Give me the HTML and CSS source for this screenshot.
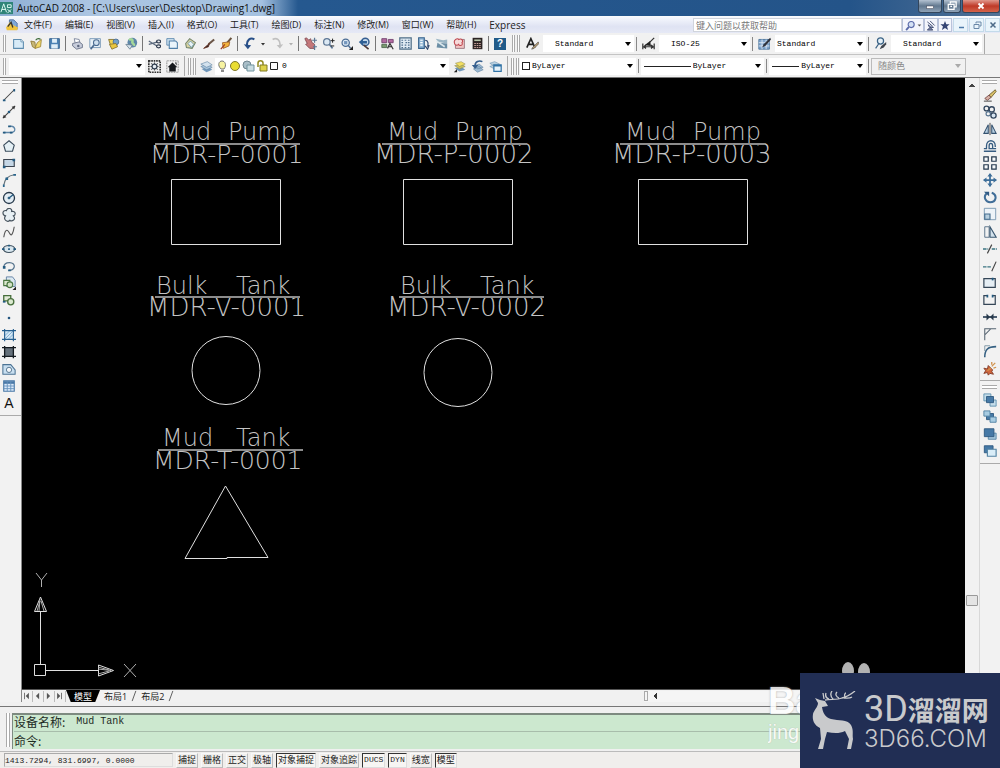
FILE: index.html
```html
<!DOCTYPE html>
<html lang="zh-CN">
<head>
<meta charset="utf-8">
<title>AutoCAD 2008</title>
<link rel="stylesheet" href="styles.css">
</head>
<body>
<div class="app">
  <header class="titlebar">
    <svg class="app-icon" viewBox="0 0 14 14"><rect width="14" height="13" fill="#2f8478"/><path d="M1 11L4 2l3 9M2 8h4M8 3h4v3H8zM8 8l4 3M12 8l-4 4" fill="none" stroke="#e6fff8"/></svg>
    <h1 class="title">AutoCAD 2008 - [C:\Users\user\Desktop\Drawing1.dwg]</h1>
    <div class="window-buttons">
      <button class="win-btn" aria-label="最小化"><svg viewBox="0 0 16 12"><rect x="4" y="6" width="8" height="3" fill="#fff" stroke="#445" stroke-width=".6"/></svg></button>
      <button class="win-btn win-max" aria-label="还原"><svg viewBox="0 0 16 12"><path d="M6 3V1h7v6h-2M3.500 4h7v6h-7zM6 6.500h2" fill="none" stroke="#fff" stroke-width="1.500"/></svg></button>
      <button class="win-btn win-close" aria-label="关闭"><svg viewBox="0 0 16 12"><path d="M5 3l6 6M11 3l-6 6" stroke="#fff" stroke-width="2.200"/></svg></button>
    </div>
  </header>

  <nav class="menubar">
    <svg class="doc-icon" viewBox="0 0 14 14"><path d="M4 1h5l4 4v7H4z" fill="#7fa8d8" stroke="#4a6a9a"/><path d="M0 10l5-7 3 4 6 3-1 3H1z" fill="#f0c43c"/><path d="M2 9l4-5 2 6" fill="none" stroke="#333" stroke-width="1.500"/></svg>
    <button class="menu">文件(F)</button>
    <button class="menu">编辑(E)</button>
    <button class="menu">视图(V)</button>
    <button class="menu">插入(I)</button>
    <button class="menu">格式(O)</button>
    <button class="menu">工具(T)</button>
    <button class="menu">绘图(D)</button>
    <button class="menu">标注(N)</button>
    <button class="menu">修改(M)</button>
    <button class="menu">窗口(W)</button>
    <button class="menu">帮助(H)</button>
    <button class="menu express">Express</button>
    <div class="help-area">
      <input class="help-input" type="text" aria-label="帮助搜索" placeholder="键入问题以获取帮助">
      <button class="help-btn search-btn" aria-label="搜索"><svg viewBox="0 0 20 12"><circle cx="8" cy="5" r="3.300" fill="#d5e2f5" stroke="#5a6aa8" stroke-width="1.200"/><path d="M5.500 7.500L2.500 11" stroke="#5a6aa8" stroke-width="2"/><path d="M15 5h4l-2 2z" fill="#555"/></svg></button>
      <button class="help-btn" aria-label="通讯中心"><svg viewBox="0 0 12 12"><path d="M2 2l6 5M5 1l5 5M3 5c0 3 3 4 6 3M5 8l-3 3h6z" fill="#7c87a8" stroke="#3e4a70"/></svg></button>
      <button class="help-btn" aria-label="收藏夹"><svg viewBox="0 0 12 12"><path d="M6 1l1.400 3.600H11L8.200 7l1.200 4L6 8.700 2.600 11l1.200-4L1 4.600h3.600z" fill="#354574"/></svg></button>
      <button class="mdi-btn" aria-label="最小化图形"><svg viewBox="0 0 12 12"><path d="M4 8.500h5" stroke="#4c7aa8" stroke-width="1.500"/></svg></button>
      <button class="mdi-btn" aria-label="还原图形"><svg viewBox="0 0 12 12"><path d="M5 4.500V3h5v4H8.500M3 5.500h5v4H3z" fill="none" stroke="#6a88a8"/></svg></button>
      <button class="mdi-btn" aria-label="关闭图形"><svg viewBox="0 0 12 12"><path d="M3.500 3.500l5 5M8.500 3.500l-5 5" stroke="#4c6a88" stroke-width="1.500"/></svg></button>
    </div>
  </nav>

  <div class="toolbar-row row-standard">
    <i class="grip"></i>
    <button class="tool" aria-label="新建"><svg viewBox="0 0 16 16"><path d="M2 3h9l3 3v8H2z" fill="#d8ebf7" stroke="#5d8cae" stroke-width="1.300"/><path d="M11 3v3h3" fill="#fff" stroke="#5d8cae"/></svg></button>
    <button class="tool" aria-label="打开"><svg viewBox="0 0 16 16"><path d="M1 5l5 1 1 8-4-2z" fill="#c8b878" stroke="#8a7530"/><path d="M6 14l3-7 5-4-1 9z" fill="#f0d768" stroke="#9a8238"/><path d="M7 4c2-3 5-2 6-1" fill="none" stroke="#3c6a38" stroke-width="1.500"/></svg></button>
    <button class="tool" aria-label="保存"><svg viewBox="0 0 16 16"><path d="M2 2h12v12H2z" fill="#4c82b4" stroke="#2a5888"/><path d="M5 2h6v5H5zM4 9h8v5H4z" fill="#dfeef8"/></svg></button>
    <i class="sep"></i>
    <button class="tool" aria-label="打印"><svg viewBox="0 0 16 16"><path d="M5 7l-1-5 6 1 1 4" fill="#fff" stroke="#6b7690"/><path d="M2 8l8-2 4 3v4l-7 2-5-4z" fill="#c8cddb" stroke="#5c667e"/><circle cx="9" cy="11" r="1.500" fill="#5c667e"/></svg></button>
    <button class="tool" aria-label="打印预览"><svg viewBox="0 0 16 16"><path d="M1 2h13v11H1z" fill="#e8f1f8" stroke="#6b8fb0"/><circle cx="9" cy="7" r="3.500" fill="#cfe0ef" stroke="#4a6a90" stroke-width="1.300"/><path d="M6 10l-4 5" stroke="#4a6a90" stroke-width="2"/></svg></button>
    <button class="tool" aria-label="发布"><svg viewBox="0 0 16 16"><path d="M2 3h7l3 3v6H5z" fill="#f1d252" stroke="#7a6a28"/><circle cx="11" cy="6" r="3.500" fill="#73a0c8" stroke="#486a90"/><path d="M3 9l8-1 2 4-7 3z" fill="#e9c63e" stroke="#857030"/></svg></button>
    <button class="tool" aria-label="三维 DWF"><svg viewBox="0 0 16 16"><circle cx="9" cy="7" r="6" fill="#5d86a8"/><path d="M5 4c3-3 5 0 4 2s3 2 2 5" fill="none" stroke="#a5d89a" stroke-width="3"/><path d="M1 9l8 1-3 5z" fill="#d8e4ec" stroke="#6a8090"/></svg></button>
    <i class="sep"></i>
    <button class="tool" aria-label="剪切"><svg viewBox="0 0 16 16"><path d="M1 5l10 6M1 9l11-3" stroke="#59687c" stroke-width="1.500"/><ellipse cx="13" cy="5.500" rx="2.500" ry="1.800" fill="none" stroke="#303c50" stroke-width="1.500"/><ellipse cx="13" cy="11.500" rx="2.500" ry="1.800" fill="none" stroke="#303c50" stroke-width="1.500"/></svg></button>
    <button class="tool" aria-label="复制"><svg viewBox="0 0 16 16"><path d="M1 2h9v8H1z" fill="#d2e5f2" stroke="#507fa8"/><path d="M4 5h8l2 2v7H4z" fill="#eaf4fb" stroke="#507fa8" stroke-width="1.300"/></svg></button>
    <button class="tool" aria-label="粘贴"><svg viewBox="0 0 16 16"><path d="M2 8l5-6 7 5-4 7-7-1z" fill="#d8d2a0" stroke="#72846a" stroke-width="1.300"/><path d="M5 8l3-3 4 4-3 4z" fill="#eaf4f7" stroke="#5f90a8"/></svg></button>
    <button class="tool" aria-label="特性匹配"><svg viewBox="0 0 16 16"><path d="M15 3L8 9" stroke="#6b5648" stroke-width="2.500"/><path d="M9 8l-7 6 6-2z" fill="#222" stroke="#6a3020"/></svg></button>
    <button class="tool" aria-label="块编辑器"><svg viewBox="0 0 16 16"><path d="M14 1L9 7" stroke="#6a5440" stroke-width="2.500"/><path d="M3 7l9-1-1 5-7 3z" fill="#f2b23c" stroke="#9a5a24"/><path d="M6 9l-5 6" stroke="#9d3a20" stroke-width="1.500"/></svg></button>
    <i class="sep"></i>
    <button class="tool" aria-label="放弃"><svg viewBox="0 0 16 16"><path d="M14 3C9 0 4 4 5 11" fill="none" stroke="#284f88" stroke-width="2.500"/><path d="M1 9l9 1-4 5z" fill="#284f88"/></svg></button>
    <button class="drop" aria-label="放弃列表"><svg viewBox="0 0 8 8"><path d="M2 3h4L4 5.500z" fill="#333"/></svg></button>
    <button class="tool" aria-label="重做"><svg viewBox="0 0 16 16"><path d="M2 3c5-3 10 1 9 8" fill="none" stroke="#c0c0c0" stroke-width="2"/><path d="M7 10l8-1-4 5z" fill="#c0c0c0"/></svg></button>
    <button class="drop" aria-label="重做列表"><svg viewBox="0 0 8 8"><path d="M2 3h4L4 5.500z" fill="#b0b0b0"/></svg></button>
    <i class="sep"></i>
    <button class="tool" aria-label="实时平移"><svg viewBox="0 0 16 16"><path d="M1 2l2-1 3 3 2-2 2 5 3 2v5H7L2 9l2-1z" fill="#c4777a" stroke="#7d4850"/><path d="M13 1v6M10 4h6M11 12h5M13 10v6" stroke="#5c7894" stroke-width="1.500"/></svg></button>
    <button class="tool" aria-label="实时缩放"><svg viewBox="0 0 16 16"><circle cx="6" cy="6" r="4" fill="#dce9f4" stroke="#5c7694" stroke-width="1.500"/><path d="M9 9l4 5" stroke="#5c7694" stroke-width="2"/><path d="M13 2v5M10.500 4.500h5M11 11h4" stroke="#222" stroke-width="1.200"/></svg></button>
    <button class="tool" aria-label="窗口缩放"><svg viewBox="0 0 16 16"><circle cx="7" cy="7" r="4.500" fill="#dce9f4" stroke="#4b6c94" stroke-width="1.500"/><path d="M5 5h4v4H5z" fill="#7395bc"/><path d="M10 10l3 4" stroke="#4b6c94" stroke-width="2"/><path d="M16 11v5h-5z" fill="#222"/></svg></button>
    <button class="tool" aria-label="缩放上一个"><svg viewBox="0 0 16 16"><circle cx="9" cy="6" r="4.500" fill="#c5d9eb" stroke="#365e90" stroke-width="1.800"/><path d="M7 10l6 5" stroke="#4d3a38" stroke-width="2"/><path d="M1 6l5-4v3h5v3H6v3z" fill="#2f6095"/></svg></button>
    <i class="sep"></i>
    <button class="tool" aria-label="特性"><svg viewBox="0 0 16 16"><path d="M1 2h6v5H1zM9 3h6v4H9z" fill="#b26aa0" stroke="#6a3a68"/><path d="M1 9h6v4H1z" fill="#7a9a70" stroke="#48624a"/><path d="M8 14l3-6 4 7M9 12h5" stroke="#333" stroke-width="1.500" fill="none"/></svg></button>
    <button class="tool" aria-label="设计中心"><svg viewBox="0 0 16 16"><path d="M1 1h14v14H1z" fill="#e0ebf4" stroke="#4f6e88" stroke-width="1.500"/><path d="M3 4h2M7 4h2M11 4h2M3 7h2M8 7h2M11 7h2M3 10h2M7 10h2M11 10h2M3 13h2M7 13h2M11 13h2" stroke="#50708e" stroke-width="1.500"/></svg></button>
    <button class="tool" aria-label="工具选项板"><svg viewBox="0 0 16 16"><path d="M2 1h7v13H2z" fill="#8fb4d4" stroke="#35618c" stroke-width="1.300"/><path d="M4 4h3M4 7h3M4 10h3" stroke="#fff" stroke-width="1.500"/><path d="M10 4c4 0 4 4 3 8M10 11l3 4 2-5" fill="none" stroke="#344b70" stroke-width="1.500"/></svg></button>
    <button class="tool" aria-label="图纸集管理器"><svg viewBox="0 0 16 16"><path d="M1 2l9 2 5-1v5L4 6z" fill="#9ab5c4"/><path d="M3 7l12 1v6L2 13z" fill="#6b8ea5"/><path d="M2 5l10 7" stroke="#dce8ed" stroke-width="2"/></svg></button>
    <button class="tool" aria-label="标记集管理器"><svg viewBox="0 0 16 16"><path d="M3 3h11v11H3z" fill="#f0c4c4" stroke="#8f6a74"/><path d="M2 8c-2-5 4-7 5-5 4-2 6 2 4 4 2 3-3 5-4 2-2 2-5 1-5-1z" fill="#f6dada" stroke="#c04850" stroke-width="1.300"/></svg></button>
    <button class="tool" aria-label="快速计算器"><svg viewBox="0 0 16 16"><rect x="2" y="1" width="12" height="14" fill="#2c2424"/><path d="M4 3h8v2H4z" fill="#b7c3aa"/><path d="M4 8h2M7 8h2M10 8h2M4 10.500h2M7 10.500h2M10 10.500h2M4 13h2M7 13h2M10 13h2" stroke="#d0a8a0" stroke-width="1.200"/></svg></button>
    <i class="sep"></i>
    <button class="tool help-tool" aria-label="帮助">?</button>
    <i class="grip"></i><i class="grip grip-tight"></i>
    <div class="style-strip">
      <div class="style-set">
        <svg class="style-icon" viewBox="0 0 16 16"><path d="M1 13L6 2l5 11M3 9h6" fill="none" stroke="#222" stroke-width="2"/><path d="M15 6l-7 7-1 2 3-1 6-6z" fill="#b39a72" stroke="#444" stroke-width=".7"/></svg>
        <select class="combo indent" aria-label="文字样式"><option>Standard</option></select>
      </div>
      <div class="style-set">
        <svg class="style-icon" viewBox="0 0 16 16"><path d="M15 1L9 7M1 8v7M15 8v7M2 12h12M2 12l3-2M2 12l3 2M14 12l-3-2M14 12l-3 2" fill="none" stroke="#333" stroke-width="1.500"/><path d="M10 5l-7 5 8 1z" fill="#222"/></svg>
        <select class="combo indent" aria-label="标注样式"><option>ISO-25</option></select>
      </div>
      <div class="style-set">
        <svg class="style-icon" viewBox="0 0 16 16"><path d="M1 3h13v12H1z" fill="#82a7ce" stroke="#416c96"/><path d="M1 7h13M1 11h13M5 3v12M10 3v12" stroke="#e3edf7"/><path d="M15 1L7 9l-2 4 4-2 7-8z" fill="#30343e"/></svg>
        <select class="combo" aria-label="表格样式"><option>Standard</option></select>
      </div>
      <div class="style-set">
        <svg class="style-icon" viewBox="0 0 16 16"><circle cx="8" cy="5" r="3.800" fill="#e6f1f8" stroke="#3b6386" stroke-width="1.500"/><path d="M6 8l-4 6" stroke="#3b6386" stroke-width="1.500"/><path d="M15 6l-6 5-2 4 5-2 3-4z" fill="#3f454e"/></svg>
        <select class="combo indent" aria-label="多重引线样式"><option>Standard</option></select>
      </div>
    </div>
  </div>

  <div class="toolbar-row row-layers">
    <i class="grip"></i>
    <select class="combo workspace" aria-label="工作空间"><option></option></select>
    <button class="tool" aria-label="工作空间设置"><svg viewBox="0 0 16 16"><rect x="1" y="1" width="14" height="14" fill="none" stroke="#333" stroke-width="2" stroke-dasharray="2 1"/><path d="M8 3v10M3 8h10M4 4l8 8M12 4l-8 8" stroke="#555" stroke-width="1.300"/><circle cx="8" cy="8" r="3" fill="#e8eef4" stroke="#344050" stroke-width="1.500"/></svg></button>
    <button class="tool" aria-label="我的工作空间"><svg viewBox="0 0 16 16"><rect x="1" y="1" width="14" height="14" fill="none" stroke="#555" stroke-dasharray="1 1"/><path d="M2 9l6-6 6 6h-2v5H4V9zM11 3h2v4" fill="#15181c"/></svg></button>
    <i class="panel-end"></i>
    <i class="grip"></i><i class="grip grip-tight"></i>
    <button class="tool" aria-label="图层特性管理器"><svg viewBox="0 0 16 16"><path d="M2 11l8-3 5 4-7 3z" fill="#7198bc"/><path d="M1 8l8-3 6 4-7 3z" fill="#a9c5dc" stroke="#587d9e" stroke-width=".7"/><path d="M1 5l8-3 6 4-7 3z" fill="#d3e2ee" stroke="#587d9e" stroke-width=".7"/></svg></button>
    <div class="combo-wrap layer-combo">
      <svg class="layer-icons" viewBox="0 0 64 14"><path d="M5 10C1 6 3 2 6 2s5 4 2 8z" fill="#f7f3a0" stroke="#777"/><path d="M5 12h3" stroke="#666" stroke-width="1.500"/><circle cx="19" cy="7" r="4.500" fill="#e9dd32" stroke="#80782a"/><circle cx="31" cy="6" r="4" fill="#a9bec8" stroke="#708690"/><path d="M31 6h7v6h-7z" fill="#c9dce2" stroke="#7194a0"/><path d="M42 8V4c0-3 5-3 5 0v2" fill="none" stroke="#928a20" stroke-width="1.500"/><path d="M44 6h7v6h-7z" fill="#ddd248" stroke="#807a25"/><path d="M54.500 3.500h7v7h-7z" fill="#fff" stroke="#222"/></svg>
      <select class="combo bare" aria-label="图层"><option>0</option></select>
    </div>
    <button class="tool" aria-label="将对象图层置为当前"><svg viewBox="0 0 16 16"><path d="M2 10l8-2 5 4-7 2z" fill="#7198bc"/><path d="M2 7l8-2 5 3-7 3z" fill="#c7c060" stroke="#888245" stroke-width=".6"/><path d="M3 4l7-2 5 3-7 3z" fill="#f2df61" stroke="#888245" stroke-width=".6"/><path d="M1 15l4-4v4z" fill="#222"/></svg></button>
    <button class="tool" aria-label="上一个图层"><svg viewBox="0 0 16 16"><path d="M3 11l7-3 5 4-7 3zM4 7l6-2 5 4-7 2z" fill="#9dbad2" stroke="#486f94" stroke-width=".6"/><path d="M14 2C10 0 5 2 5 7" fill="none" stroke="#365f8e" stroke-width="2"/><path d="M1 6h8l-4 5z" fill="#365f8e"/></svg></button>
    <button class="tool" aria-label="图层状态管理器"><svg viewBox="0 0 16 16"><path d="M1 4l6-2 6 3-6 3zM1 8l5-2 5 4-4 1z" fill="#b7cfdf" stroke="#6990b0" stroke-width=".7"/><path d="M6 6h9v8H6z" fill="#e6f2fa" stroke="#3072a5" stroke-width="1.500"/><path d="M6 7h9" stroke="#3072a5" stroke-width="2"/></svg></button>
    <i class="panel-end"></i>
    <i class="grip"></i><i class="grip grip-tight"></i>
    <div class="property-strip">
      <div class="combo-wrap color-combo"><i class="swatch"></i><select class="combo bare" aria-label="颜色"><option>ByLayer</option></select></div>
      <i class="strip-sep"></i>
      <div class="combo-wrap linetype-combo"><i class="line-sample"></i><select class="combo bare" aria-label="线型"><option>ByLayer</option></select></div>
      <i class="strip-sep"></i>
      <div class="combo-wrap weight-combo"><i class="line-sample short"></i><select class="combo bare" aria-label="线宽"><option>ByLayer</option></select></div>
      <i class="strip-sep"></i>
      <div class="combo-wrap plot-combo"><select class="combo plot" disabled aria-label="打印样式"><option>随颜色</option></select></div>
    </div>
  </div>

  <main class="workspace-area">
    <aside class="side-tools side-left">
      <i class="hgrip"></i>
      <div class="tool-column draw-tools">
        <button aria-label="直线"><svg viewBox="0 0 16 16"><path d="M2 14L14 2" stroke="#444" stroke-width="1.200"/><path d="M1 13h3v2H1zM13 1h2v3h-2z" fill="#235a80"/></svg></button>
        <button aria-label="构造线"><svg viewBox="0 0 16 16"><path d="M1 15L15 1" stroke="#444" stroke-width="1.300"/><path d="M1 15l1-4 3 3zM15 1l-1 4-3-3z" fill="#333"/><circle cx="8" cy="8" r="1.500" fill="#235a80"/></svg></button>
        <button aria-label="多段线"><svg viewBox="0 0 16 16"><path d="M2 12h9c6-1 4-8-2-7" fill="none" stroke="#5e86a8" stroke-width="1.500"/><path d="M1 11h3v2H1zM9 11h3v2H9zM7 4h3v2H7z" fill="#235a80"/></svg></button>
        <button aria-label="正多边形"><svg viewBox="0 0 16 16"><path d="M8 2l6 5-2 7H4L2 7z" fill="#e5f0f5" stroke="#3b4c5c" stroke-width="1.300"/></svg></button>
        <button aria-label="矩形"><svg viewBox="0 0 16 16"><path d="M2 4h12v8H2z" fill="#c6d7e6" stroke="#3b4450" stroke-width="1.300"/><path d="M1 11h3v3H1zM12 3h3v3h-3z" fill="#235a80"/></svg></button>
        <button aria-label="圆弧"><svg viewBox="0 0 16 16"><path d="M2 14C3 7 6 3 14 2" fill="none" stroke="#66747c" stroke-width="1.300"/><path d="M1 13h2v3H1zM4 5h3v3H4zM13 1h3v2h-3z" fill="#28658c"/></svg></button>
        <button aria-label="圆"><svg viewBox="0 0 16 16"><circle cx="8" cy="8" r="6.300" fill="#e3edf4" stroke="#27394b" stroke-width="1.500"/><path d="M8 8l5-4M6.500 8h3M8 6.500v3" stroke="#235a80" stroke-width="1.500"/></svg></button>
        <button aria-label="修订云线"><svg viewBox="0 0 16 16"><path d="M4 9C0 8 0 2 5 3c1-4 7-3 6 1 5-1 5 4 2 5 4 4-2 7-4 5-3 3-8-1-5-5z" fill="#e8f0f4" stroke="#46535e" stroke-width="1.300"/></svg></button>
        <button aria-label="样条曲线"><svg viewBox="0 0 16 16"><path d="M2 14C4 2 7 6 9 10s4-2 5-8" fill="none" stroke="#555" stroke-width="1.300"/></svg></button>
        <button aria-label="椭圆"><svg viewBox="0 0 16 16"><ellipse cx="8" cy="8" rx="6.500" ry="4" fill="#d8e6ee" stroke="#3d4f5d" stroke-width="1.300"/><path d="M7 7h2v2H7zM0 7h3v2H0zM13 7h3v2h-3zM7 3h2v2H7z" fill="#235a80"/></svg></button>
        <button aria-label="椭圆弧"><svg viewBox="0 0 16 16"><path d="M2 9c1-7 13-6 12 0-1 4-4 4-6 4" fill="none" stroke="#58758e" stroke-width="1.500"/><path d="M1 8h3v3H1zM7 12h3v2H7z" fill="#235a80"/></svg></button>
        <button aria-label="插入块"><svg viewBox="0 0 16 16"><path d="M5 1h7l3 4v7H5z" fill="#dce9f2" stroke="#5b7ca0"/><path d="M2 5h7v6H2z" fill="#dce8cf" stroke="#4a7640" stroke-width="1.300"/><circle cx="9" cy="10" r="3.300" fill="#d2e2c6" stroke="#4a7640" stroke-width="1.300"/><path d="M16 12v4h-4z" fill="#222"/></svg></button>
        <button aria-label="创建块"><svg viewBox="0 0 16 16"><path d="M2 3h8v6H2z" fill="#e2ead8" stroke="#476f3c" stroke-width="1.500"/><circle cx="10" cy="10" r="3.500" fill="#dbe9d0" stroke="#476f3c" stroke-width="1.500"/><path d="M1 9h3v2H1z" fill="#235a80"/></svg></button>
        <button aria-label="点"><svg viewBox="0 0 16 16"><circle cx="8" cy="8" r="1.500" fill="#245680"/></svg></button>
        <button aria-label="图案填充"><svg viewBox="0 0 16 16"><path d="M3 3h10v10H3z" fill="#d5e8f6"/><path d="M3 9l6-6M3 13L13 3M7 13l6-6" stroke="#75a7cd"/><path d="M0 3h16M0 13h16M3 1v14M13 1v14" stroke="#276090" stroke-width="1.300"/></svg></button>
        <button aria-label="渐变色"><svg viewBox="0 0 16 16"><path d="M3 3h10v10H3z" fill="#65717b"/><path d="M0 3h16M0 13h16M3 1v14M13 1v14" stroke="#151b20" stroke-width="1.500"/></svg></button>
        <button aria-label="面域"><svg viewBox="0 0 16 16"><path d="M1 3h9l5 6v5H1z" fill="#c9dff0" stroke="#4c7394" stroke-width="1.200"/><circle cx="8" cy="9" r="3" fill="#f3f7fa" stroke="#496b88"/></svg></button>
        <button aria-label="表格"><svg viewBox="0 0 16 16"><path d="M2 2h12v12H2z" fill="#dceafa" stroke="#4978a7" stroke-width="1.300"/><path d="M2 4h12" stroke="#4978a7" stroke-width="3"/><path d="M2 8h12M2 11h12M6 3v11M10 3v11" stroke="#6391bd"/></svg></button>
        <button class="mtext" aria-label="多行文字">A</button>
      </div>
    </aside>

    <section class="document">
      <div class="view">
        <svg class="drawing" role="img" aria-label="图形">
          <g transform="translate(-22 -78)">
            <g class="cad-text">
              <text><tspan x="160" y="140">Mud </tspan><tspan x="228">Pump</tspan><tspan class="tag" x="150" y="163">MDR-P-0001</tspan></text>
              <text><tspan x="387" y="140">Mud </tspan><tspan x="455">Pump</tspan><tspan class="tag wide" x="374" y="163">MDR-P-0002</tspan></text>
              <text><tspan x="625" y="140">Mud </tspan><tspan x="693">Pump</tspan><tspan class="tag wide" x="612" y="163">MDR-P-0003</tspan></text>
              <text><tspan x="156" y="294">Bulk </tspan><tspan x="236">Tank</tspan><tspan class="tag wide" x="147" y="316">MDR-V-0001</tspan></text>
              <text><tspan x="400" y="294">Bulk </tspan><tspan x="480">Tank</tspan><tspan class="tag wide" x="387" y="316">MDR-V-0002</tspan></text>
              <text><tspan x="162" y="446">Mud </tspan><tspan x="236">Tank</tspan><tspan class="tag" x="153" y="469">MDR-T-0001</tspan></text>
            </g>
            <g class="cad-rule"><path d="M155 144h145M382 144h145M620 144h145M155 297h145M399 297h145M158 450h145"/></g>
            <g class="cad-line">
              <path d="M171.500 179.500h109v65h-109zM403.500 179.500h109v65h-109zM638.500 179.500h109v65h-109z"/>
              <circle cx="226" cy="370.500" r="34"/><circle cx="458" cy="372.500" r="34"/>
              <path d="M225.500 486L268 557.500h-41v1h-42z"/>
              <path d="M34.500 664.500h11v11h-11zM40.500 664V612M46 670.500h52M98.500 665v11l15-5.500zM34.500 611.500h12L40.500 597z"/>
              <path class="thin" d="M98 667l11 3M98 669l13 1.500M98 674l11-3M37 611l3-10M39 611l1-12M44 611l-3-10"/>
              <path class="thin" d="M36 573l5.500 7 5.500-7M41.500 580v7M124 664l12 13M136 664l-12 13"/>
            </g>
          </g>
        </svg>
        <div class="vscroll"><button class="scroll-up" aria-label="向上滚动"></button><i class="thumb"></i></div>
      </div>
      <div class="sheet-bar">
        <div class="sheet-nav">
          <button aria-label="第一个"><svg viewBox="0 0 10 10"><path d="M2.500 1v8" stroke="#555"/><path d="M8 1v8L4 5z" fill="#555"/></svg></button>
          <button aria-label="上一个"><svg viewBox="0 0 10 10"><path d="M7 1v8L3 5z" fill="#555"/></svg></button>
          <button aria-label="下一个"><svg viewBox="0 0 10 10"><path d="M3 1v8l4-4z" fill="#555"/></svg></button>
          <button aria-label="最后一个"><svg viewBox="0 0 10 10"><path d="M7.500 1v8" stroke="#555"/><path d="M2 1v8l4-4z" fill="#555"/></svg></button>
        </div>
        <button class="sheet active">模型</button>
        <button class="sheet">布局1</button>
        <svg class="slash" viewBox="0 0 6 13"><path d="M1 12L5 1" stroke="#555"/></svg>
        <button class="sheet">布局2</button>
        <svg class="slash" viewBox="0 0 6 13"><path d="M1 12L5 1" stroke="#555"/></svg>
        <div class="hscroll"><i class="splitter"></i><button class="scroll-left" aria-label="向左滚动"></button></div>
      </div>
    </section>

    <aside class="side-tools side-right">
      <i class="hgrip"></i>
      <div class="tool-column modify-tools">
        <button aria-label="删除"><svg viewBox="0 0 16 16"><path d="M14 2L7 8l2 3 6-7z" fill="#d9c069" stroke="#6e602d"/><path d="M7 8l-5 4 3 2 4-3z" fill="#d8b0a4" stroke="#774c4a"/><path d="M1 15h9" stroke="#333"/></svg></button>
        <button aria-label="复制对象"><svg viewBox="0 0 16 16"><circle cx="4" cy="4" r="2.800" fill="none" stroke="#34485f" stroke-width="1.500"/><circle cx="10" cy="5" r="3" fill="none" stroke="#34485f" stroke-width="1.500"/><circle cx="6" cy="10" r="2.500" fill="none" stroke="#55728f" stroke-width="1.300"/><circle cx="12" cy="12" r="3" fill="#d6e4f0" stroke="#34485f" stroke-width="1.500"/></svg></button>
        <button aria-label="镜像"><svg viewBox="0 0 16 16"><path d="M6 3v10H1zM10 3v10h5z" fill="#b9d0e2" stroke="#34516e" stroke-width="1.200"/><path d="M8 1v14" stroke="#333"/></svg></button>
        <button aria-label="偏移"><svg viewBox="0 0 16 16"><path d="M1 14h14M1 11h3V8c0-8 10-8 10 0v1M15 11h-4V8c0-4-4-4-4 0v3h4" fill="none" stroke="#365c81" stroke-width="1.500"/></svg></button>
        <button aria-label="阵列"><svg viewBox="0 0 16 16"><path d="M1 1h5v5H1zM10 1h5v5h-5zM1 10h5v5H1zM10 10h5v5h-5z" fill="#f6f8fa" stroke="#24384d" stroke-width="1.400"/></svg></button>
        <button aria-label="移动"><svg viewBox="0 0 16 16"><path d="M8 1v14M1 8h14" stroke="#3e6f9a" stroke-width="2"/><path d="M8 0l3 4H5zM8 16l3-4H5zM0 8l4-3v6zM16 8l-4-3v6z" fill="#3e6f9a"/></svg></button>
        <button aria-label="旋转"><svg viewBox="0 0 16 16"><path d="M4 4c-4 4-1 10 4 10 7 0 9-8 2-11" fill="none" stroke="#416e98" stroke-width="2.300"/><path d="M1 2h6v5z" fill="#315b85"/></svg></button>
        <button aria-label="缩放"><svg viewBox="0 0 16 16"><path d="M1.500 1.500h13v13h-13z" fill="#edf3f8" stroke="#7393ae"/><path d="M2 8h6v6H2z" fill="#b7cfdf" stroke="#446c8d" stroke-width="1.300"/></svg></button>
        <button aria-label="拉伸"><svg viewBox="0 0 16 16"><path d="M2 2h5v12H2z" fill="none" stroke="#4f6880"/><path d="M8 2l7 12H8z" fill="#d3e2ec" stroke="#3a5871" stroke-width="1.300"/></svg></button>
        <button aria-label="修剪"><svg viewBox="0 0 16 16"><path d="M0 8h6M10 8h6" stroke="#3b7481" stroke-width="1.500" stroke-dasharray="4 1"/><path d="M5 13L10 3" stroke="#444" stroke-width="1.300"/></svg></button>
        <button aria-label="延伸"><svg viewBox="0 0 16 16"><path d="M0 9h10" stroke="#3b7481" stroke-width="1.500" stroke-dasharray="4 1"/><path d="M10 14l5-11" stroke="#444" stroke-width="1.300"/></svg></button>
        <button aria-label="打断于点"><svg viewBox="0 0 16 16"><path d="M1 3h13v10H1z" fill="#e6eef4" stroke="#354657" stroke-width="1.400"/><path d="M10 2h2v3h-2z" fill="#235a80"/></svg></button>
        <button aria-label="打断"><svg viewBox="0 0 16 16"><path d="M5 3H1v10h13V3h-3" fill="none" stroke="#354657" stroke-width="1.400"/><path d="M4 2h2v3H4zM10 2h2v3h-2z" fill="#235a80"/></svg></button>
        <button aria-label="合并"><svg viewBox="0 0 16 16"><path d="M0 8h16" stroke="#34495e" stroke-width="2"/><path d="M8 8L4 4v8zM8 8l4-4v8z" fill="#27394b"/></svg></button>
        <button aria-label="倒角"><svg viewBox="0 0 16 16"><path d="M2 15V9l7-7h6M2 9V2h7" fill="none" stroke="#566471" stroke-width="1.200"/></svg></button>
        <button aria-label="圆角"><svg viewBox="0 0 16 16"><path d="M2 15C2 7 5 3 15 3" fill="none" stroke="#356082" stroke-width="1.800"/><path d="M2 8V2h6" stroke="#76909f" fill="none"/></svg></button>
        <button aria-label="分解"><svg viewBox="0 0 16 16"><path d="M1 7l4 1 1-4 3 3 2 2-1 2 2 3-4-1-2 2-1-3-4 1 2-3z" fill="#cf653c" stroke="#803c28"/><path d="M5 10l4-3M10 5l4-4M12 7l3-1M10 3V0" stroke="#d0924c" stroke-width="1.500"/></svg></button>
      </div>
      <i class="hgrip second"></i>
      <div class="tool-column order-tools">
        <button aria-label="前置"><svg viewBox="0 0 16 16"><path d="M1 1h8v8H1zM8 8h7v7H8z" fill="#c4ddea" stroke="#5d8fae"/><path d="M4 4h8v7H4z" fill="#4679a6" stroke="#2d587f"/></svg></button>
        <button aria-label="后置"><svg viewBox="0 0 16 16"><path d="M4 4h8v7H4z" fill="#4679a6" stroke="#2d587f"/><path d="M1 1h7v6H1zM8 8h7v6H8z" fill="#a8cce2" stroke="#4c7ea0"/></svg></button>
        <button aria-label="置于对象之上"><svg viewBox="0 0 16 16"><path d="M6 7h9v7H6z" fill="#a4c6dc" stroke="#5383a3"/><path d="M1.500 2h11v9h-11z" fill="#4679a6" stroke="#2d587f"/></svg></button>
        <button aria-label="置于对象之下"><svg viewBox="0 0 16 16"><path d="M1.500 2h10v8h-10z" fill="#4679a6" stroke="#2d587f"/><path d="M5 6h10v8H5z" fill="#d9edf8" stroke="#5383a3" stroke-width="1.300"/></svg></button>
      </div>
    </aside>
  </main>

  <section class="command">
    <i class="command-grip"></i>
    <div class="command-box">
      <p class="history">设备名称: <span class="mono">Mud Tank</span></p>
      <label class="prompt">命令: <input class="command-input" type="text"></label>
    </div>
  </section>

  <footer class="statusbar">
    <output class="coords">1413.7294, 831.6997, 0.0000</output>
    <button class="mode">捕捉</button>
    <button class="mode">栅格</button>
    <button class="mode">正交</button>
    <button class="mode">极轴</button>
    <button class="mode pressed">对象捕捉</button>
    <button class="mode">对象追踪</button>
    <button class="mode pressed latin">DUCS</button>
    <button class="mode pressed latin">DYN</button>
    <button class="mode">线宽</button>
    <button class="mode pressed">模型</button>
  </footer>

  <div class="watermark">
    <svg class="paws" viewBox="0 0 32 26"><ellipse cx="9" cy="11" rx="6" ry="9" fill="#d2d2d2"/><ellipse cx="25" cy="12" rx="6" ry="9" fill="#d2d2d2"/></svg>
    <span class="wm-name">Bai</span>
    <span class="wm-sub">jing</span>
  </div>
  <div class="brand">
    <svg class="deer" viewBox="0 0 44 60">
      <path d="M3 7l5 2 5 1 3 5-6 1c1 6 3 10 9 12 8 2 16 0 20 6 3 6 1 9 2 14l-2 10h-4l2-10-4-8c-6 3-12 2-18 1l-2 7-2 10H6l3-10-1-11C2 34 0 29 1 23c1-4 5-7 5-11z" fill="#c9cacc"/>
      <path d="M13 9c6-1 12 0 17-2 5-1 8-3 13-7M17 8c-3-1-4-3-3-6M21 8c-3-3-3-5-1-8M27 7c-3-1-4-4-2-6M32 7c2 0 5 1 8-1M12 8L11 2M33 6c-1-2 0-4 1-4" fill="none" stroke="#c9cacc" stroke-width="1.300"/>
    </svg>
    <div class="brand-text"><strong class="brand-name"><span class="brand-3d">3D</span>溜溜网</strong><span class="brand-url">3D66.COM</span></div>
  </div>
</div>
</body>
</html>
```
FILE: styles.css
```css
* { box-sizing: border-box; }
body {
  margin: 0;
  background: #f0f0f0;
  color: #222;
  font: 9px/12px "Open Sans", "Noto Sans CJK SC", sans-serif;
}
button, select, input { font: inherit; color: inherit; margin: 0; }
button { padding: 0; border: 0; background: none; }
i { display: block; }
svg { display: block; }
.app { position: relative; display: flex; flex-direction: column; height: 100vh; overflow: hidden; }

/* title */
.titlebar {
  display: flex; align-items: center; flex: none; height: 16px;
  background: linear-gradient(90deg, #8fb0d4 0, #abc5e2 90px, #a4c1e0 262px, #25588f 298px, #245489 85%, #527296);
}
.app-icon { width: 13px; height: 13px; }
.title { flex: 1; margin: 0 0 0 4px; font: 10px/16px "Open Sans", sans-serif; color: #111; white-space: nowrap; }
.window-buttons { display: flex; align-self: flex-start; gap: 1px; }
.win-btn { display: grid; place-items: center; width: 24px; height: 13px; border: 1px solid #33465c; border-top: 0; border-radius: 0 0 3px 3px; background: linear-gradient(#b4c2d2, #62788f 50%, #8fa2b6); }
.win-max { width: 18px; }
.win-close { width: 38px; background: linear-gradient(#e0988c, #bf3a28 50%, #d4634a); }
.win-btn svg { width: 14px; height: 10px; }

/* menu */
.menubar { display: flex; align-items: center; gap: 13px; flex: none; height: 17px; background: linear-gradient(#f6f8fd, #dfe3f3 60%, #e6e9f6); border-top: 1px solid #f8fafc; }
.doc-icon { width: 12px; height: 12px; margin-left: 6px; margin-right: -7px; }
.menu { line-height: 16px; text-align: left; white-space: nowrap; flex: none; }
.express { font-size: 10px; }
.help-area { display: flex; align-items: center; flex: none; width: 307px; height: 14px; margin-left: auto; }
.help-input { flex: 1; min-width: 0; height: 14px; padding: 0 2px; border: 1px solid #d0d4dc; background: #fff; outline: 0; }
.help-input::placeholder { color: #777; opacity: 1; }
.help-btn, .mdi-btn { display: grid; place-items: center; width: 14px; height: 14px; border: 1px solid #b9c3da; background: #f4f6fc; }
.search-btn { width: 22px; }
.mdi-btn { border-color: #c3daea; background: #e9f4fb; width: 15px; margin-left: 1px; }
.help-btn svg { width: 12px; height: 11px; }
.search-btn svg { width: 20px; }
.mdi-btn svg { width: 12px; height: 12px; }

/* toolbars */
.toolbar-row { display: flex; align-items: center; flex: none; height: 22px; background: #f1f1f1; border-bottom: 1px solid #c4c4c4; }
.row-layers { border-bottom-color: #777; height: 23px; }
.grip { flex: none; width: 3px; height: 17px; margin: 0 3px 0 3px; border: solid #aaa; border-width: 0 1px; background: #fff; }
.grip-tight { margin-left: -1px; margin-right: 1px; }
.tool { display: grid; place-items: center; flex: none; width: 18px; height: 18px; }
.tool svg { width: 13px; height: 13px; }
.drop { width: 10px; height: 18px; flex: none; }
.drop svg { width: 8px; height: 8px; margin: auto; }
.sep { flex: none; width: 1px; height: 15px; margin: 0 2px; background: #777; }
.help-tool { width: 12px; height: 12px; margin: 0 3px; background: #215a88; color: #fff; font: bold 10px/12px "Liberation Sans", sans-serif; }
.panel-end { flex: none; width: 1px; height: 20px; background: #aaa; margin-left: 3px; }
.style-strip, .property-strip { display: flex; align-items: center; flex: 1; min-width: 0; }
.style-strip { margin-right: 15px; border-right: 1px solid #aaa; height: 20px; }
.style-set { display: flex; align-items: center; flex: 1; min-width: 0; border-left: 1px solid #888; height: 14px; }
.style-set:first-child { border-left: 0; }
.style-icon { flex: none; width: 13px; height: 13px; margin: 0 4px 0 5px; }
.combo {
  flex: 1; min-width: 0; height: 17px; padding: 0 12px 0 2px; border: 0; border-radius: 0; appearance: none; outline: 0; opacity: 1;
  font: 8px/16px "Liberation Mono", "Noto Sans CJK SC", monospace; color: #000;
  background: #fff url("data:image/svg+xml,%3Csvg xmlns='http://www.w3.org/2000/svg' width='6' height='4'%3E%3Cpath d='M0 0h6L3 4z'/%3E%3C/svg%3E") no-repeat right 3px center;
}
.style-set .combo { margin-right: 2px; }
.style-set .indent { padding-left: 12px; }
.workspace { flex: none; width: 136px; }
.combo-wrap { display: flex; align-items: center; min-width: 0; height: 17px; background: #fff; }
.layer-combo { flex: none; width: 234px; margin-right: 1px; }
.layer-icons { width: 64px; height: 14px; margin-left: 1px; }
.property-strip { margin-right: 34px; gap: 1px; }
.strip-sep { flex: none; width: 1px; height: 14px; margin: 0 1px; background: #888; }
.swatch { flex: none; width: 8px; height: 8px; margin: 0 0 0 2px; border: 1px solid #222; }
.color-combo { flex: 117; }
.linetype-combo { flex: 125; }
.weight-combo { flex: 98; }
.plot-combo { flex: 94; border: 1px solid #bbb; }
.line-sample { flex: none; width: 47px; height: 1px; margin: 0 0 0 3px; background: #222; }
.line-sample.short { width: 27px; }
.plot {
  height: 15px; padding-left: 6px; font-size: 9px; color: #888;
  background: #f1f1f1 url("data:image/svg+xml,%3Csvg xmlns='http://www.w3.org/2000/svg' width='6' height='4'%3E%3Cpath d='M0 0h6L3 4z' fill='%23aaa'/%3E%3C/svg%3E") no-repeat right 4px center;
}

/* work area */
.workspace-area { display: flex; flex: 1; min-height: 0; }
.side-tools { flex: none; width: 21px; background: #f2f2f2; }
.side-left { border-right: 1px solid #888; width: 22px; }
.side-right { border-left: 1px solid #d8d8d8; }
.hgrip { height: 4px; margin: 2px 3px 2px 2px; border: solid #aaa; border-width: 1px 0; background: #fff; }
.second { margin-top: 4px; }
.tool-column { display: flex; flex-direction: column; border-bottom: 1px solid #aaa; }
.tool-column button { display: grid; place-items: center; flex: 1; width: 18px; min-height: 0; }
.side-right .tool-column button { width: 19px; }
.tool-column svg { width: 14px; height: 14px; }
.draw-tools { height: 330px; padding-bottom: 3px; }
.modify-tools { height: 295px; padding-bottom: 3px; }
.order-tools { height: 73px; padding-bottom: 3px; }
.tool-column .mtext { font: 14px/16px "Liberation Sans", sans-serif; color: #111; }
.document { display: flex; flex-direction: column; flex: 1; min-width: 0; }
.view { display: flex; flex: 1; min-height: 0; background: #000; }
.drawing { flex: 1; min-width: 0; height: 100%; }
.cad-text { font: 200 24px "DejaVu Sans", sans-serif; fill: #c4c4c4; }
.tag { font-size: 25px; }
.tag.wide { font-size: 26px; }
.cad-rule { fill: none; stroke: #8c8c8c; stroke-width: 2; }
.cad-line { fill: none; stroke: #e0e0e0; }
.thin { stroke: #b0b0b0; }
.vscroll { position: relative; flex: none; width: 14px; background: #f1f1f1; }
.scroll-up { display: block; width: 13px; height: 14px; background: conic-gradient(from 143deg at 50% 0, #444 0 74deg, transparent 0) center / 6px 4px no-repeat; }
.thumb { position: absolute; left: 1px; right: 1px; bottom: 83px; height: 11px; border: 1px solid #999; background: #e4e4e4; border-radius: 1px; }
.sheet-bar { display: flex; align-items: center; flex: none; height: 13px; background: #f1f1f1; border-top: 1px solid #555; }
.sheet-nav { display: flex; }
.sheet-nav button { width: 11px; height: 11px; border-right: 1px solid #bbb; }
.sheet-nav svg { width: 9px; height: 8px; }
.sheet { height: 12px; padding: 0 4px; white-space: nowrap; font-size: 9px; line-height: 11px; }
.sheet.active { padding: 0 8px; background: #000; color: #fff; clip-path: polygon(0 0, 100% 0, 86% 100%, 14% 100%); }
.slash { width: 6px; height: 12px; }
.hscroll { display: flex; align-items: center; width: 335px; height: 11px; margin-left: auto; background: #f5f5f5; }
.splitter { width: 4px; height: 10px; border: 1px solid #aaa; }
.scroll-left { width: 14px; height: 10px; background: conic-gradient(from 53deg at 0 50%, #333 0 74deg, transparent 0) center / 4px 6px no-repeat; }

/* command line */
.command { display: flex; flex: none; height: 46px; margin-top: 4px; padding: 6px 0 2px 6px; border-top: 1px solid #777; border-bottom: 1px solid #bbb; }
.command-grip { width: 4px; margin: 0 2px 2px 0; border: solid #aaa; border-width: 0 1px; background: #fff; }
.command-box { flex: 1; padding-left: 1px; border: solid #7d8a80; border-width: 2px 0 0 1px; background: #cce8cf; font: 12px/17px "Noto Sans CJK SC", sans-serif; color: #1d2b1f; }
.history { display: flex; gap: 11px; height: 17px; line-height: 14px; margin: 0; border-bottom: 1px solid #a8bdab; }
.mono { font: 10px/14px "Liberation Mono", monospace; }
.prompt { display: flex; }
.command-input { flex: 1; height: 17px; border: 0; padding: 0; background: transparent; outline: 0; }

/* status */
.statusbar { display: flex; align-items: center; gap: 3px; flex: none; height: 16px; padding-left: 4px; background: #f0eeec; }
.coords { width: 169px; height: 14px; border: 1px solid; border-color: #aaa #ddd #ddd #aaa; font: 8px/13px "Liberation Mono", monospace; white-space: nowrap; }
.mode { height: 15px; padding: 0 1px; border: 1px solid; border-color: #f8f8f8 #bbb #bbb #f8f8f8; line-height: 12px; white-space: nowrap; }
.pressed { border-color: #333 #ddd #ddd #333; background: #f7f5f3; }
.latin { font: 8px/12px "Liberation Mono", monospace; }

/* overlays */
.watermark { position: absolute; right: 128px; bottom: 20px; width: 104px; height: 88px; overflow: hidden; color: #fff; opacity: .85; }
.paws { width: 32px; height: 26px; margin-left: 71px; }
.wm-name { display: block; margin-top: -6px; font: bold 38px/42px "Liberation Sans", sans-serif; text-shadow: 0 0 2px #999; }
.wm-sub { display: block; font: 20px/22px "Liberation Sans", sans-serif; margin-top: -1px; text-shadow: 0 0 1px #aaa; }
.brand { position: absolute; right: 0; bottom: 0; display: flex; width: 200px; height: 95px; padding: 18px 0 0 12px; gap: 8px; background: #212e54; color: #c9cacc; }
.deer { flex: none; width: 44px; height: 60px; }
.brand-text { display: flex; flex-direction: column; white-space: nowrap; }
.brand-name { font: 700 27px/36px "Noto Sans CJK SC", sans-serif; }
.brand-3d { font: 36px/36px "Roboto", sans-serif; }
.brand-url { font: 300 24px/22px "Inter", sans-serif; }
```
